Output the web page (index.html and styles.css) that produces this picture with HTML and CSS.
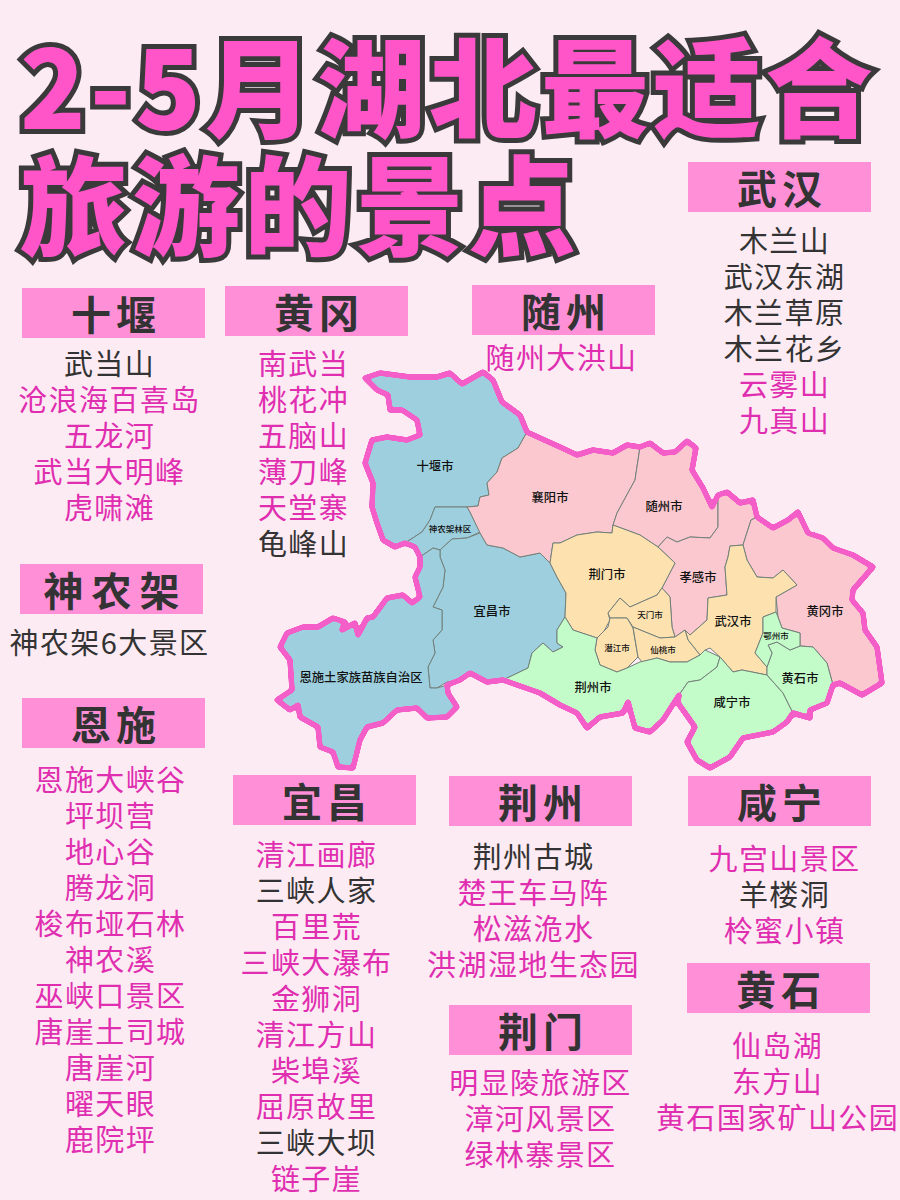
FILE: index.html
```html
<!DOCTYPE html>
<html lang="zh-CN">
<head>
<meta charset="utf-8">
<title>2-5月湖北最适合旅游的景点</title>
<link rel="stylesheet" href="styles.css">
</head>
<body>
<main class="poster">
  <svg class="map" viewBox="0 0 900 1200">
    <defs>
      <filter id="soft-edge" color-interpolation-filters="sRGB" x="-5%" y="-5%" width="110%" height="110%">
        <feGaussianBlur stdDeviation="1.3"/>
        <feComponentTransfer>
          <feFuncA type="linear" slope="7" intercept="-2.2"/>
        </feComponentTransfer>
      </filter>
    </defs>
    <g class="map-land">
      <path class="blue" d="M365 378L380 373L410 377L437 377L450 373L462 384L483 372L493 380L502 402L520 415L527 432L518 448L502 458L497 472L487 483L489 495L480 497L478 506L467 507L435 507L430 520L422 532L405 543L395 547L383 540L377 523L372 507L373 483L365 463L372 440L387 437L407 440L420 435L417 420L402 410L390 410L388 395L377 390Z"/>
      <path class="blue" d="M435 507L467 507L470 512L480 532L467 538L452 539L440 550L433 548L420 557L415 547L405 543L422 532L430 520Z"/>
      <path class="blue" d="M440 550L452 539L467 538L480 533L487 545L503 548L520 557L540 553L550 563L557 577L566 593L565 617L557 630L557 643L563 647L553 652L543 643L532 653L528 668L503 680L487 682L470 673L460 680L447 682L437 688L430 688L428 667L435 653L433 640L442 630L442 610L433 607L443 587L445 570L440 557Z"/>
      <path class="blue" d="M420 557L433 548L440 550L440 557L445 570L443 587L433 607L442 610L442 630L433 640L435 653L428 667L430 688L437 688L447 685L448 693L457 707L447 717L427 718L417 708L397 710L383 723L367 727L360 740L353 768L338 767L333 752L320 747L318 727L300 717L298 705L290 710L277 700L292 690L290 660L280 647L287 633L303 627L318 627L333 618L345 622L342 630L355 623L358 635L367 618L373 617L387 598L403 595L412 603L420 597L415 577L420 567Z"/>
      <path class="rose" d="M527 432L540 438L560 447L577 455L593 450L613 453L627 445L640 447L635 480L617 513L613 525L612 533L597 532L577 535L560 543L553 543L550 563L540 553L520 557L503 548L487 545L480 533L470 512L467 507L478 506L480 497L489 495L487 483L497 472L502 458L518 448Z"/>
      <path class="rose" d="M640 447L650 443L663 453L675 452L687 441L696 448L692 470L703 488L712 507L718 495L718 527L710 538L690 537L677 542L667 537L658 547L640 535L613 525L617 513L635 480Z"/>
      <path class="rose" d="M718 495L727 492L740 503L753 500L757 517L751 520L743 545L730 546L728 557L725 567L727 595L708 598L707 620L690 635L685 630L675 637L672 627L670 597L662 588L675 563L658 547L667 537L677 542L690 537L710 538L718 527Z"/>
      <path class="rose" d="M757 517L773 528L788 520L798 512L808 533L823 538L833 548L853 555L873 567L853 590L852 600L863 613L865 630L877 647L882 683L862 695L840 683L833 685L827 663L813 647L800 646L800 633L782 628L778 617L776 597L797 585L783 570L773 578L757 577L747 560L743 545L751 520Z"/>
      <path class="sand" d="M743 545L730 546L728 557L725 567L727 595L708 598L707 620L690 635L685 630L688 640L700 655L705 650L710 648L720 657L733 672L742 670L767 675L767 667L755 653L763 633L763 617L776 612L776 597L797 585L783 570L773 578L757 577L747 560Z"/>
      <path class="sand" d="M553 543L560 543L577 535L597 532L612 533L613 525L640 535L658 547L675 563L662 588L657 595L630 607L620 598L608 613L610 620L603 633L597 638L573 630L565 617L566 593L557 577L550 563Z"/>
      <path class="sand" d="M608 613L620 598L630 607L657 595L662 588L670 597L672 627L675 637L660 638L633 627L627 618L610 618Z"/>
      <path class="sand" d="M610 618L627 618L633 628L638 657L627 668L617 672L600 665L595 650L597 638L608 627Z"/>
      <path class="sand" d="M633 627L660 638L675 637L685 630L688 640L700 655L687 662L670 662L657 658L642 662L638 657Z"/>
      <path class="mint" d="M503 680L528 668L532 653L543 643L553 652L563 647L557 643L557 630L565 617L573 630L597 638L595 650L600 665L617 672L627 668L640 662L657 658L670 662L687 662L700 655L705 650L720 657L717 667L700 680L688 682L679 695L663 720L650 732L635 728L628 702L623 713L600 717L587 728L577 713L560 705L540 693Z"/>
      <path class="mint" d="M679 695L688 682L700 680L717 667L720 657L733 672L742 670L767 675L783 693L793 713L787 722L773 732L743 738L730 757L710 768L697 760L687 742L695 727L678 703Z"/>
      <path class="mint" d="M767 667L772 653L768 645L777 642L790 650L800 646L813 647L827 663L833 685L827 703L810 710L810 718L793 713L783 693L767 675Z"/>
      <path class="mint" d="M763 617L776 612L778 617L782 628L800 633L800 646L790 650L777 642L768 645L772 653L767 667L755 653L763 633Z"/>
    </g>
    <path class="map-edge" d="M365 378L380 373L410 377L437 377L450 373L462 384L483 372L493 380L502 402L520 415L527 432L540 438L560 447L577 455L593 450L613 453L627 445L640 447L650 443L663 453L675 452L687 441L696 448L692 470L703 488L712 507L718 495L727 492L740 503L753 500L757 517L773 528L788 520L798 512L808 533L823 538L833 548L853 555L873 567L853 590L852 600L863 613L865 630L877 647L882 683L862 695L840 683L833 685L827 703L810 710L810 718L793 713L787 722L773 732L743 738L730 757L710 768L697 760L687 742L695 727L678 703L679 695L663 720L650 732L635 728L628 702L623 713L600 717L587 728L577 713L560 705L540 693L503 680L487 682L470 673L460 680L447 685L448 693L457 707L447 717L427 718L417 708L397 710L383 723L367 727L360 740L353 768L338 767L333 752L320 747L318 727L300 717L298 705L290 710L277 700L292 690L290 660L280 647L287 633L303 627L318 627L333 618L345 622L342 630L355 623L358 635L367 618L373 617L387 598L403 595L412 603L420 597L415 577L420 567L420 557L415 547L405 543L395 547L383 540L377 523L372 507L373 483L365 463L372 440L387 437L407 440L420 435L417 420L402 410L390 410L388 395L377 390Z"/>
    <text class="city" x="435" y="471">十堰市</text>
    <text class="city city-xs" x="450" y="532">神农架林区</text>
    <text class="city" x="492" y="616">宜昌市</text>
    <text class="city" x="361" y="682">恩施土家族苗族自治区</text>
    <text class="city" x="550" y="502">襄阳市</text>
    <text class="city" x="664" y="511">随州市</text>
    <text class="city" x="698" y="582">孝感市</text>
    <text class="city" x="607" y="579">荆门市</text>
    <text class="city city-xs" x="650" y="618">天门市</text>
    <text class="city city-xs" x="617" y="651">潜江市</text>
    <text class="city city-xs" x="663" y="653">仙桃市</text>
    <text class="city" x="733" y="626">武汉市</text>
    <text class="city" x="825" y="616">黄冈市</text>
    <text class="city city-xs" x="776" y="639">鄂州市</text>
    <text class="city" x="800" y="683">黄石市</text>
    <text class="city" x="732" y="707">咸宁市</text>
    <text class="city" x="593" y="692">荆州市</text>
  </svg>

  <h1 class="title">
    <span class="title-line title-one">2-5月湖北最适合</span>
    <span class="title-line title-two">旅游的景点</span>
  </h1>

  <div class="col col-a">
    <section class="spot spot-shiyan">
      <h2>十堰</h2>
      <ul>
        <li class="plain">武当山</li><li>沧浪海百喜岛</li><li>五龙河</li><li>武当大明峰</li><li>虎啸滩</li>
      </ul>
    </section>
    <section class="spot spot-snj">
      <h2>神农架</h2>
      <ul><li class="plain">神农架6大景区</li></ul>
    </section>
    <section class="spot spot-enshi">
      <h2>恩施</h2>
      <ul>
        <li>恩施大峡谷</li><li>坪坝营</li><li>地心谷</li><li>腾龙洞</li><li>梭布垭石林</li><li>神农溪</li><li>巫峡口景区</li><li>唐崖土司城</li><li>唐崖河</li><li>曜天眼</li><li>鹿院坪</li>
      </ul>
    </section>
  </div>

  <div class="col col-b">
    <section class="spot spot-huanggang">
      <h2>黄冈</h2>
      <ul>
        <li>南武当</li><li>桃花冲</li><li>五脑山</li><li>薄刀峰</li><li>天堂寨</li><li class="plain">龟峰山</li>
      </ul>
    </section>
    <section class="spot spot-yichang">
      <h2>宜昌</h2>
      <ul>
        <li>清江画廊</li><li class="plain">三峡人家</li><li>百里荒</li><li>三峡大瀑布</li><li>金狮洞</li><li>清江方山</li><li>柴埠溪</li><li>屈原故里</li><li class="plain">三峡大坝</li><li>链子崖</li>
      </ul>
    </section>
  </div>

  <div class="col col-c">
    <section class="spot spot-suizhou">
      <h2>随州</h2>
      <ul><li>随州大洪山</li></ul>
    </section>
    <section class="spot spot-jingzhou">
      <h2>荆州</h2>
      <ul>
        <li class="plain">荆州古城</li><li>楚王车马阵</li><li>松滋洈水</li><li>洪湖湿地生态园</li>
      </ul>
    </section>
    <section class="spot spot-jingmen">
      <h2>荆门</h2>
      <ul>
        <li>明显陵旅游区</li><li>漳河风景区</li><li>绿林寨景区</li>
      </ul>
    </section>
  </div>

  <div class="col col-d">
    <section class="spot spot-wuhan">
      <h2>武汉</h2>
      <ul>
        <li class="plain">木兰山</li><li class="plain">武汉东湖</li><li class="plain">木兰草原</li><li class="plain">木兰花乡</li><li>云雾山</li><li>九真山</li>
      </ul>
    </section>
    <section class="spot spot-xianning">
      <h2>咸宁</h2>
      <ul>
        <li>九宫山景区</li><li class="plain">羊楼洞</li><li>柃蜜小镇</li>
      </ul>
    </section>
    <section class="spot spot-huangshi">
      <h2>黄石</h2>
      <ul>
        <li>仙岛湖</li><li>东方山</li><li>黄石国家矿山公园</li>
      </ul>
    </section>
  </div>
</main>
</body>
</html>
```
FILE: styles.css
```css
* { box-sizing: border-box; }
html, body { margin: 0; padding: 0; }
body { background: #fdebf3; }

.poster {
  position: relative;
  width: 900px;
  height: 1200px;
  overflow: hidden;
  background: #fdebf3;
  color: #333;
  font-family: "Noto Sans CJK SC", "Noto Sans", sans-serif;
  display: grid;
  grid-template-columns: 225px 224px 239px 212px;
  grid-template-rows: 162px 123px 915px;
}

/* Title */
.title { display: contents; }
.title-line {
  font-size: 108px;
  font-weight: 900;
  line-height: 1;
  letter-spacing: 4px;
  white-space: nowrap;
  color: #ff55c8;
  -webkit-text-stroke: 10px #3a3a3a;
  paint-order: stroke fill;
  position: relative;
  z-index: 1;
}
.title-one { grid-column: 1 / -1; grid-row: 1; padding: 28px 0 0 20px; }
.title-two { grid-column: 1 / 4; grid-row: 2; padding: 0 0 0 20px; margin-top: -16px; }

/* Columns */
.col { display: flex; flex-direction: column; position: relative; z-index: 2; }
.col-a { grid-column: 1; grid-row: 3; padding-top: 3px; }
.col-b { grid-column: 2; grid-row: 3; padding-top: 1px; }
.col-c { grid-column: 3; grid-row: 3; }
.col-d { grid-column: 4; grid-row: 2 / 4; }

/* Sections */
.spot { width: 183px; display: flex; flex-direction: column; align-items: center; }
.spot h2 {
  align-self: stretch;
  height: 50px;
  margin: 0;
  background: #ff90d8;
  color: #333;
  font-size: 40px;
  font-weight: 700;
  line-height: 50px;
  letter-spacing: 5px;
  text-indent: 5px;
  text-align: center;
  white-space: nowrap;
}
.spot-snj h2 { letter-spacing: 8px; text-indent: 8px; }
.spot ul {
  list-style: none;
  margin: var(--gap, 8px) 0 0;
  padding: 0;
  display: flex;
  flex-direction: column;
  align-items: center;
  width: 100%;
  transform: translateX(var(--shift, 0));
}
.spot li {
  font-size: 29px;
  line-height: 36px;
  letter-spacing: 1.4px;
  white-space: nowrap;
  font-weight: 400;
  color: #e02eb0;
}
.spot li.plain { color: #333; }

.spot-shiyan    { margin-left: 22px; --gap: 6px;  --shift: -4px; }
.spot-snj       { margin-left: 20px; margin-top: 40px; --gap: 9px; --shift: -2px; }
.spot-enshi     { margin-left: 22px; margin-top: 39px; --gap: 12px; --shift: -3px; }
.spot-huanggang { --gap: 8px; --shift: -13px; }
.spot-yichang   { margin-left: 8px; margin-top: 215px; --gap: 10px; --shift: -8px; }
.spot-suizhou   { margin-left: 23px; --gap: 3px; --shift: -2px; }
.spot-jingzhou  { margin-top: 402px; --gap: 11px; --shift: -7px; }
.spot-jingmen   { margin-top: 24px; --gap: 8px; --shift: 0px; }
.spot-wuhan     { --gap: 9px; --shift: 5px; }
.spot-xianning  { margin-top: 339px; --gap: 13px; --shift: 5px; }
.spot-huangshi  { margin-left: -1px; margin-top: 16px; --gap: 13px; --shift: -1px; }

/* Map */
.map { position: absolute; inset: 0; width: 900px; height: 1200px; z-index: 0; }
.map-land { stroke: #73807a; stroke-width: 1px; stroke-linejoin: round; }
.map-edge {
  fill: none;
  stroke: #f45ec8;
  stroke-width: 5px;
  stroke-linejoin: round;
  filter: url(#soft-edge);
}
.blue { fill: #9dcfde; }
.rose { fill: #fac8ce; }
.sand { fill: #fde2b0; }
.mint { fill: #c3fcc8; }
.city {
  font-size: 12.3px;
  font-weight: 500;
  fill: #111;
  text-anchor: middle;
}
.city-xs { font-size: 8.5px; }
```
